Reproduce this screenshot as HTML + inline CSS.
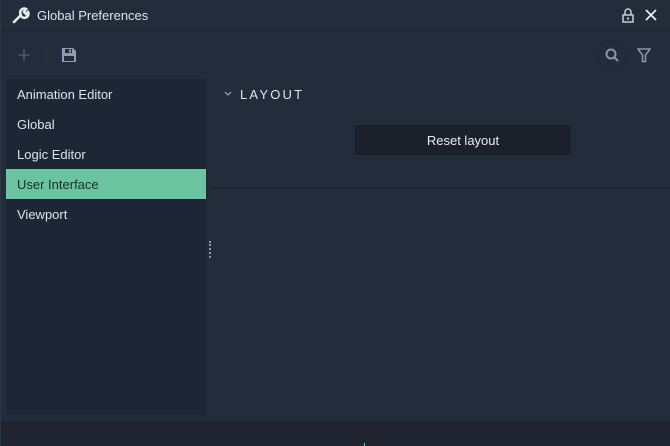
<!DOCTYPE html>
<html><head><style>
body{margin:0;width:670px;height:446px;overflow:hidden;background:#222c3b;font-family:"Liberation Sans",sans-serif;position:relative}
div{position:absolute;box-sizing:border-box}
.t{color:#dde3ea;font-size:13px}
</style></head><body>
<div style="left:0;top:0;width:670px;height:31px;background:#232c3a;border-bottom:1px solid #1b222d"></div>
<svg style="position:absolute;left:12px;top:7px" width="18" height="17" viewBox="0 0 18 17"><path d="M2 15 L9 8 M9 8 A4 4 0 0 1 14 2 L12 5 L14 7 L16 5 A4 4 0 0 1 10 10" stroke="#e8ecf0" stroke-width="2.6" fill="none" stroke-linecap="round"/></svg>
<div class="t" style="left:37px;top:8px">Global Preferences</div>
<svg style="position:absolute;left:621px;top:8px" width="14" height="15" viewBox="0 0 14 15"><path d="M4 7V4a3 3 0 0 1 6 0V7" stroke="#c5ccd5" stroke-width="1.5" fill="none"/><rect x="2" y="7" width="10" height="7" stroke="#c5ccd5" stroke-width="1.5" fill="none"/><rect x="6" y="9.5" width="2" height="2" fill="#c5ccd5"/></svg>
<svg style="position:absolute;left:645px;top:9px" width="12" height="12"><path d="M1 1L11 11M11 1L1 11" stroke="#e8ecf0" stroke-width="1.8"/></svg>
<svg style="position:absolute;left:17px;top:48px" width="14" height="14"><path d="M7 1V13M1 7H13" stroke="#4b5667" stroke-width="1.6"/></svg>
<div style="left:46px;top:46px;width:1px;height:18px;background:#2a3444"></div>
<svg style="position:absolute;left:61px;top:47px" width="16" height="16" viewBox="0 0 16 16"><path d="M1 1H12L15 4V15H1Z" fill="#8e9bb0"/><rect x="4" y="2" width="7" height="4" fill="#222c3b"/><rect x="8" y="2.5" width="2" height="3" fill="#8e9bb0"/><rect x="3" y="9" width="10" height="5" fill="#222c3b"/></svg>
<div style="left:597px;top:40px;width:30px;height:30px;border-radius:50%;border:1px solid #1e2632"></div>
<svg style="position:absolute;left:605px;top:48px" width="15" height="15"><circle cx="6" cy="6" r="4.5" stroke="#8a96a8" stroke-width="2" fill="none"/><path d="M9.5 9.5L13 13" stroke="#8a96a8" stroke-width="2"/></svg>
<svg style="position:absolute;left:637px;top:48px" width="14" height="15"><path d="M1 1H13L8.5 7V13.5H5.5V7Z" stroke="#8a96a8" stroke-width="1.6" fill="none"/></svg>
<div style="left:6px;top:79px;width:200px;height:336px;background:#1d2634;border-radius:2px"></div>
<div class="t" style="left:17px;top:87px">Animation Editor</div>
<div class="t" style="left:17px;top:117px">Global</div>
<div class="t" style="left:17px;top:147px">Logic Editor</div>
<div style="left:6px;top:169px;width:200px;height:30px;background:#6cc3a0"></div>
<div class="t" style="left:17px;top:177px;color:#1e2a33">User Interface</div>
<div class="t" style="left:17px;top:207px">Viewport</div>
<div style="left:209px;top:241px;width:2px;height:17px;border-left:2px dotted #8a96a8"></div>
<svg style="position:absolute;left:224px;top:91px" width="8" height="6"><path d="M1 1L4 4L7 1" stroke="#aab3c0" fill="none"/></svg>
<div style="left:240px;top:87px;color:#dde3ea;font-size:13px;letter-spacing:2.2px">LAYOUT</div>
<div style="left:355px;top:125px;width:216px;height:30px;background:#1b212b;border-radius:2px;color:#e8ecf0;font-size:13px;text-align:center;line-height:31px">Reset layout</div>
<div style="left:211px;top:187px;width:459px;height:2px;background:#1c2430"></div>
<div style="left:0;top:421px;width:670px;height:25px;background:#1f2430"></div>
<div style="left:0;top:0;width:1px;height:446px;background:#2c3645"></div>
<div style="left:364px;top:443px;width:1px;height:3px;background:#6cc3a0"></div>
</body></html>
